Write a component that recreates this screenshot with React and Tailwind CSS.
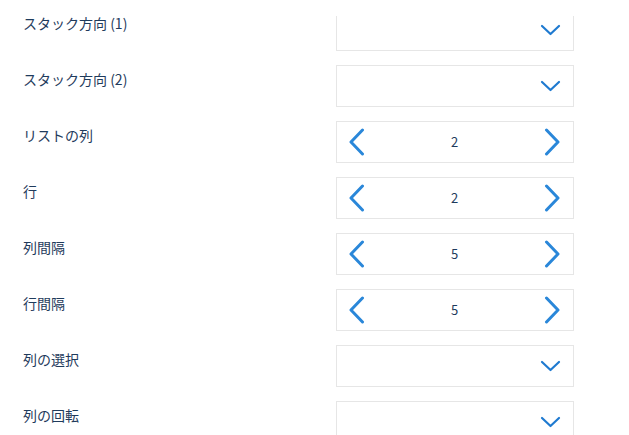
import React from 'react'

const font = { fontFamily: '"Noto Sans CJK JP", "Noto Sans", sans-serif' }

const rows = [
  { label: 'スタック方向 (1)', type: 'select', clip: true },
  { label: 'スタック方向 (2)', type: 'select' },
  { label: 'リストの列', type: 'stepper', value: 2 },
  { label: '行', type: 'stepper', value: 2 },
  { label: '列間隔', type: 'stepper', value: 5 },
  { label: '行間隔', type: 'stepper', value: 5 },
  { label: '列の選択', type: 'select' },
  { label: '列の回転', type: 'select' },
]

const ChevronDown = () => (
  <svg width="21" height="12" viewBox="0 0 21 12" fill="none">
    <path d="M2 2 L10.5 10 L19 2" stroke="#1f7ad0" strokeWidth="2.2" strokeLinecap="round" strokeLinejoin="round" />
  </svg>
)

const ChevronLeft = () => (
  <svg width="17" height="28" viewBox="0 0 17 28" fill="none">
    <path d="M14.5 2 L3 14 L14.5 26" stroke="#2a87d9" strokeWidth="3" strokeLinecap="round" strokeLinejoin="round" />
  </svg>
)

const ChevronRight = () => (
  <svg width="17" height="28" viewBox="0 0 17 28" fill="none">
    <path d="M2.5 2 L14 14 L2.5 26" stroke="#2a87d9" strokeWidth="3" strokeLinecap="round" strokeLinejoin="round" />
  </svg>
)

const Select = () => (
  <div className="flex h-[42px] w-[238px] items-center justify-end border border-[#e6e6e6] bg-white pr-[12px]">
    <ChevronDown />
  </div>
)

const Stepper = ({ value }) => (
  <div className="flex h-[42px] w-[238px] items-center justify-between border border-[#e6e6e6] bg-white pl-[11px] pr-[12px]">
    <ChevronLeft />
    <span className="text-[13px] text-[#1e3a5c]" style={font}>{value}</span>
    <ChevronRight />
  </div>
)

export default function App() {
  return (
    <div className="h-[435px] w-[629px] overflow-hidden bg-white">
      <div className="flex flex-col gap-[14px] pt-[9px]">
        {rows.map((row) => (
          <div key={row.label} className="flex items-start">
            <div className="w-[336px] pl-[23px] pt-[4px] text-[14px] leading-[20px] text-[#1f3b5c]" style={font}>
              {row.label}
            </div>
            {row.clip ? (
              <div className="mt-[7px] h-[35px] overflow-hidden">
                <div className="-mt-[7px]">
                  <Select />
                </div>
              </div>
            ) : row.type === 'select' ? (
              <Select />
            ) : (
              <Stepper value={row.value} />
            )}
          </div>
        ))}
      </div>
    </div>
  )
}
